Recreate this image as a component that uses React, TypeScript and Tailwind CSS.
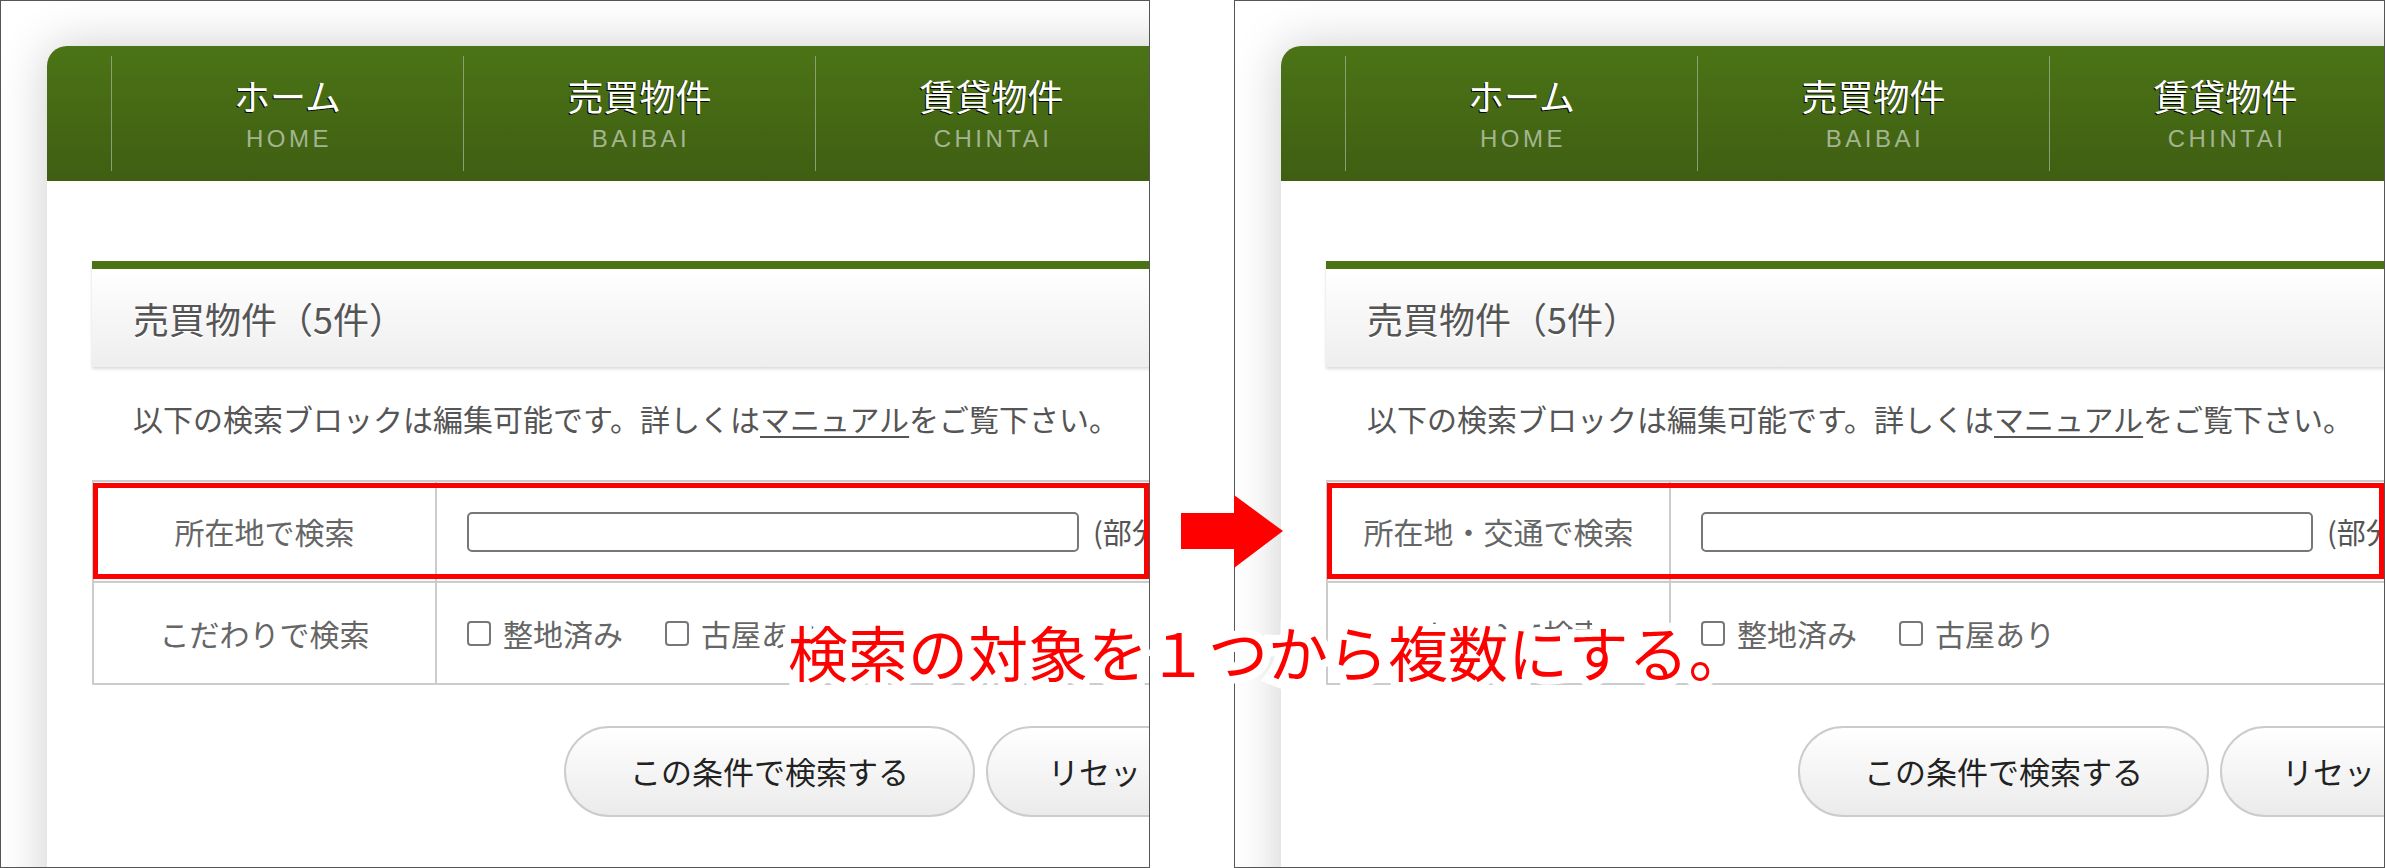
import React from "react";

const NAV_ITEMS: [string, string][] = [
  ["ホーム", "HOME"],
  ["売買物件", "BAIBAI"],
  ["賃貸物件", "CHINTAI"],
];

function Panel({ locLabel, wide }: { locLabel: string; wide?: boolean }) {
  return (
    <div
      className={`relative h-[868px] shrink-0 overflow-hidden border border-[#555] bg-white ${
        wide ? "w-[1151px]" : "w-[1150px]"
      }`}
    >
      <div className="ml-[46px] mt-[45px] h-[900px] w-[1400px] rounded-tl-[20px] bg-white shadow-[0_0_50px_rgba(0,0,0,0.2)]">
        <nav className="flex h-[135px] rounded-tl-[20px] bg-linear-to-b from-[#4b7416] to-[#3f5e12] py-[10px] pl-[64px]">
          {NAV_ITEMS.map(([jp, en]) => (
            <div
              key={en}
              className="flex w-[352px] shrink-0 flex-col items-center justify-center border-l border-[#8aa074]"
            >
              <span className="text-[36px] leading-[40px] text-white [text-shadow:-1px_1px_0_#000]">
                {jp}
              </span>
              <span className="mt-[10px] pl-[3px] font-['Liberation_Sans',sans-serif] text-[24px] leading-[28px] tracking-[3.5px] text-[#a3b590]">
                {en}
              </span>
            </div>
          ))}
        </nav>

        <div className="px-[45px] pt-[80px]">
          <div className="flex h-[106px] items-center border-t-8 border-[#4a7316] bg-linear-to-b from-white to-[#eeeeee] pl-[41px] shadow-[0_2px_3px_rgba(0,0,0,0.15)]">
            <h2 className="text-[36px] leading-[44px] text-[#555] [text-shadow:0_2px_0_#fff]">
              売買物件（5件）
            </h2>
          </div>

          <p className="mt-[27px] pl-[41px] text-[30px] leading-[48px] text-[#555]">
            以下の検索ブロックは編集可能です。詳しくは
            <span className="underline decoration-2 underline-offset-[5px]">マニュアル</span>
            をご覧下さい。
          </p>

          <div className="mt-[38px] w-[1300px] border-2 border-[#ccc]">
            <div className="flex h-[99px]">
              <div className="flex w-[343px] shrink-0 items-center justify-center border-r-2 border-[#ccc] text-[30px] text-[#666]">
                {locLabel}
              </div>
              <div className="flex items-center pl-[30px]">
                <div className="h-[40px] w-[612px] rounded-[5px] border-2 border-[#777] bg-white" />
                <span className="ml-[14px] text-[29px] text-[#555]">(部分一致)</span>
              </div>
            </div>
            <div className="flex h-[102px] border-t-2 border-[#ccc]">
              <div className="flex w-[343px] shrink-0 items-center justify-center border-r-2 border-[#ccc] text-[30px] text-[#666]">
                こだわりで検索
              </div>
              <div className="flex items-center pl-[30px] text-[30px] text-[#666]">
                <span className="h-[25px] w-[24px] rounded-[4px] border-2 border-[#777] bg-white" />
                <span className="ml-[12px]">整地済み</span>
                <span className="ml-[42px] h-[25px] w-[24px] rounded-[4px] border-2 border-[#777] bg-white" />
                <span className="ml-[12px]">古屋あり</span>
              </div>
            </div>
          </div>

          <div className="mt-[41px] flex gap-[11px] pl-[472px]">
            <button className="h-[91px] w-[411px] shrink-0 rounded-full border-2 border-[#ccc] bg-linear-to-b from-white to-[#ebebeb] text-[31px] text-[#222]">
              この条件で検索する
            </button>
            <button className="h-[91px] w-[248px] shrink-0 rounded-full border-2 border-[#ccc] bg-linear-to-b from-white to-[#ebebeb] text-[31px] text-[#222]">
              リセット
            </button>
          </div>
        </div>
      </div>

      <div className="absolute left-[92px] right-0 top-[482px] h-[96px] border-[5px] border-[#ff0000]" />
    </div>
  );
}

export default function App() {
  const note = "検索の対象を１つから複数にする。";
  return (
    <div className="relative flex h-[868px] w-[2385px] gap-[84px] overflow-hidden bg-white font-['Noto_Sans_CJK_JP',sans-serif]">
      <Panel locLabel="所在地で検索" />
      <Panel locLabel="所在地・交通で検索" wide />

      <svg
        className="absolute left-[1181px] top-[495px]"
        width="102"
        height="73"
        viewBox="0 0 102 73"
      >
        <polygon points="0,18 53,18 53,0 102,36 53,73 53,54 0,54" fill="#ff0000" />
      </svg>

      <div className="absolute left-[788px] top-[621px] whitespace-nowrap text-[60px] leading-[60px]">
        <span className="text-white [-webkit-text-stroke:16px_#fff]">{note}</span>
        <span className="absolute left-0 top-0 text-[#ff0000]">{note}</span>
      </div>
    </div>
  );
}
